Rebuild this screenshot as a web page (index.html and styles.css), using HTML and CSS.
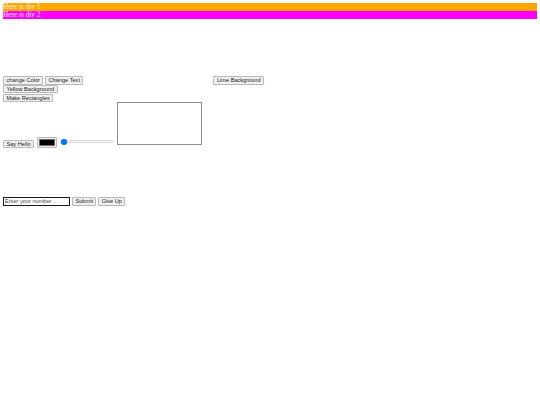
FILE: index.html
```html
<!DOCTYPE html>
<html>
<head>
<meta charset="utf-8">
<link rel="stylesheet" href="styles.css">
</head>
<body>
<div class="bar bar-orange">Here is div 1</div>
<div class="bar bar-magenta">Here is div 2</div>
<div class="row row-top"><button class="btn">change Color</button><button class="btn">Change Text</button><span class="blank"></span><button class="btn">Lime Background</button></div>
<div class="row row-single"><button class="btn">Yellow Background</button></div>
<div class="row row-single"><button class="btn">Make Rectangles</button></div>
<div class="row row-draw"><button class="btn">Say Hello</button><input class="color" type="color" value="#000000"><input class="range" type="range" min="0" max="100" value="0"><span class="box"></span></div>
<div class="row row-form"><input class="num" type="text" placeholder="Enter your number ..."><button class="btn">Submit</button><button class="btn">Give Up</button></div>
</body>
</html>
```

FILE: styles.css
```css
html {
  background: #ffffff;
}
body {
  margin: 3px;
  font-family: "Liberation Serif", serif;
}
.bar {
  color: #fff6e6;
  font-size: 7.3px;
  line-height: 8px;
  height: 8px;
}
.bar-orange {
  background: #ffa500;
}
.bar-magenta {
  background: #ff00ff;
}
.row {
  display: flex;
  align-items: flex-end;
  gap: 1.7px;
}
.row-top {
  height: 65.9px;
}
.row-single {
  height: 8.75px;
  align-items: flex-start;
}
.row-draw {
  height: 45.9px;
}
.row-form {
  margin-top: 48.7px;
  height: 8.75px;
}
.btn {
  font-family: "Liberation Sans", Arial, sans-serif;
  font-size: 5.625px;
  line-height: 6.4px;
  height: 8.5px;
  padding: 0 2.5px;
  margin: 0;
  border: 1px solid #b8b8b8;
  border-radius: 1px;
  background: #efefef;
  color: #222222;
  box-sizing: border-box;
  white-space: nowrap;
}
.blank {
  display: block;
  width: 126.6px;
  height: 63.3px;
}
.color {
  -webkit-appearance: none;
  appearance: none;
  width: 20.5px;
  height: 11.5px;
  margin: 0 0.8px;
  padding: 0;
  border: 1px solid #b8b8b8;
  border-radius: 1px;
  background: #efefef;
  box-sizing: border-box;
}
.color::-webkit-color-swatch-wrapper {
  padding: 1.6px 1.2px;
}
.color::-webkit-color-swatch {
  border: 1px solid #6a6a6a;
  border-radius: 0;
}
.range {
  -webkit-appearance: none;
  appearance: none;
  width: 54px;
  height: 6px;
  margin: 0 0.8px 3.3px;
  padding: 0;
  background: transparent;
}
.range::-webkit-slider-runnable-track {
  height: 3px;
  background: #efefef;
  border: 1px solid #dedede;
  border-radius: 2px;
  box-sizing: border-box;
}
.range::-webkit-slider-thumb {
  -webkit-appearance: none;
  appearance: none;
  width: 5.4px;
  height: 5.4px;
  margin-top: -2.2px;
  border: none;
  border-radius: 50%;
  background: #0075ff;
}
.box {
  display: block;
  width: 85.2px;
  height: 43px;
  margin-bottom: 3px;
  border: 1px solid #8e8e8e;
  box-sizing: border-box;
}
.num {
  width: 67px;
  height: 8.5px;
  margin: 0 0.3px 0 0;
  padding: 0 1px;
  border: 1px solid #1a1a1a;
  box-sizing: border-box;
  font-family: "Liberation Sans", Arial, sans-serif;
  font-size: 5.625px;
  color: #222222;
  background: #ffffff;
}
.num::placeholder {
  color: #444444;
}
```
